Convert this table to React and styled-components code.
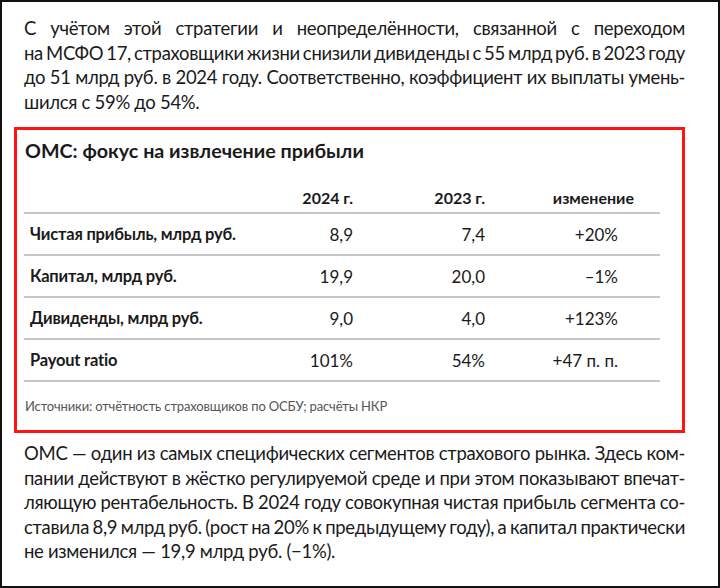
import React from 'react';
import styled, { createGlobalStyle } from 'styled-components';

const GlobalStyle = createGlobalStyle`
  html, body {
    margin: 0;
    padding: 0;
    background: #ffffff;
  }
  body {
    font-family: Lato, "Noto Sans", "DejaVu Sans", sans-serif;
    color: #1a1a1a;
  }
`;

const Frame = styled.div`
  box-sizing: border-box;
  width: 720px;
  height: 588px;
  border: 2px solid #111111;
  padding: 14px 33px 0 22px;
`;

const Paragraph = styled.p`
  margin: 0;
  font-size: 18.5px;
  line-height: 24.5px;
  letter-spacing: -0.3px;
`;

// each line is set by hand so the breaks match the layout; justified except the last
const Line = styled.span`
  display: block;
  white-space: nowrap;
  text-align: ${props => (props.$last ? 'left' : 'justify')};
  text-align-last: ${props => (props.$last ? 'left' : 'justify')};
  word-spacing: ${props => (props.$last ? '0' : '-3px')};
`;

const Box = styled.section`
  margin: 13px 0 8px -10px;
  border: 3px solid #ff1414;
  padding: 9px 21px 14px 8px;
`;

const Title = styled.h2`
  margin: 0 0 19px;
  font-size: 19.7px;
  line-height: 24px;
  font-weight: 700;
`;

const Table = styled.table`
  width: 636px;
  margin-left: -1px;
  border-collapse: collapse;
  table-layout: fixed;
  font-size: 17px;
`;

const HeadCell = styled.th`
  height: 24px;
  padding: 6px ${props => props.$pr || 0}px 0 0;
  text-align: right;
  font-size: 16px;
  font-weight: 700;
  vertical-align: top;
  line-height: 20px;
  border-bottom: 2px solid #c6c6c6;
`;

const Row = styled.tr`
  border-bottom: 2px solid #c6c6c6;
`;

const LabelCell = styled.td`
  height: 40px;
  padding: 0 0 0 6px;
  font-size: 16.5px;
  letter-spacing: -0.2px;
  font-weight: 700;
  text-align: left;
`;

const ValueCell = styled.td`
  height: 40px;
  padding: 0 ${props => props.$pr || 0}px 0 0;
  text-align: right;
`;

const Source = styled.p`
  margin: 14px 0 0;
  font-size: 13px;
  letter-spacing: -0.15px;
  line-height: 20px;
  color: #555555;
`;

const rows = [
  ['Чистая прибыль, млрд руб.', '8,9', '7,4', '+20%'],
  ['Капитал, млрд руб.', '19,9', '20,0', '–1%'],
  ['Дивиденды, млрд руб.', '9,0', '4,0', '+123%'],
  ['Payout ratio', '101%', '54%', '+47 п. п.'],
];

const intro = [
  'С учётом этой стратегии и неопределённости, связанной с переходом',
  'на МСФО 17, страховщики жизни снизили дивиденды с 55 млрд руб. в 2023 году',
  'до 51 млрд руб. в 2024 году. Соответственно, коэффициент их выплаты умень-',
  'шился с 59% до 54%.',
];

const outro = [
  'ОМС — один из самых специфических сегментов страхового рынка. Здесь ком-',
  'пании действуют в жёстко регулируемой среде и при этом показывают впечат-',
  'ляющую рентабельность. В 2024 году совокупная чистая прибыль сегмента со-',
  'ставила 8,9 млрд руб. (рост на 20% к предыдущему году), а капитал практически',
  'не изменился — 19,9 млрд руб. (−1%).',
];

const Text = ({ lines }) => (
  <Paragraph>
    {lines.map((l, i) => (
      <Line key={i} $last={i === lines.length - 1}>{l}</Line>
    ))}
  </Paragraph>
);

export default function App() {
  return (
    <>
      <GlobalStyle />
      <Frame>
        <Text lines={intro} />
        <Box>
          <Title>ОМС: фокус на извлечение прибыли</Title>
          <Table>
            <colgroup>
              <col style={{ width: 247 }} />
              <col style={{ width: 82 }} />
              <col style={{ width: 132 }} />
              <col style={{ width: 175 }} />
            </colgroup>
            <thead>
              <tr>
                <HeadCell />
                <HeadCell>2024 г.</HeadCell>
                <HeadCell>2023 г.</HeadCell>
                <HeadCell $pr={26}>изменение</HeadCell>
              </tr>
            </thead>
            <tbody>
              {rows.map(r => (
                <Row key={r[0]}>
                  <LabelCell>{r[0]}</LabelCell>
                  <ValueCell>{r[1]}</ValueCell>
                  <ValueCell>{r[2]}</ValueCell>
                  <ValueCell $pr={42}>{r[3]}</ValueCell>
                </Row>
              ))}
            </tbody>
          </Table>
          <Source>Источники: отчётность страховщиков по ОСБУ; расчёты НКР</Source>
        </Box>
        <Text lines={outro} />
      </Frame>
    </>
  );
}
